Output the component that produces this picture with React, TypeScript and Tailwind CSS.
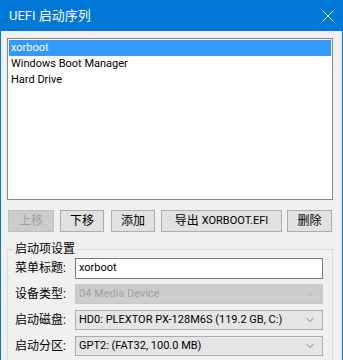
import { ChevronDown, X } from 'lucide-react';

const FONT = 'Roboto, "Noto Sans CJK SC", sans-serif';

const ITEMS = ['xorboot', 'Windows Boot Manager', 'Hard Drive'];

type Btn = { label: React.ReactNode; key: string; cls: string; disabled?: boolean };
const BUTTONS: Btn[] = [
  { key: 'up', label: '上移', cls: 'ml-[1px] w-[46px]', disabled: true },
  { key: 'down', label: '下移', cls: 'ml-[6px] w-[44px]' },
  { key: 'add', label: '添加', cls: 'ml-[7px] w-[44px]' },
  {
    key: 'export',
    label: (
      <>
        导出&nbsp;<span className="text-[11px]">XORBOOT.EFI</span>
      </>
    ),
    cls: 'ml-[6px] w-[121px]',
  },
  { key: 'del', label: '删除', cls: 'ml-[5px] w-[45px]' },
];

function Combo({ value, disabled }: { value: string; disabled?: boolean }) {
  return (
    <div
      className={`flex h-[20px] w-[248px] items-center border pl-[3px] pr-[6px] text-[11px] ${
        disabled
          ? 'border-[#c6c6c6] bg-[#cccccc] text-[#a0a0a0]'
          : 'border-[#acacac] bg-[#e5e5e5] text-black'
      }`}
    >
      <span className="flex-1 truncate">{value}</span>
      <ChevronDown
        size={12}
        strokeWidth={1.5}
        className={disabled ? 'text-[#b0b0b0]' : 'text-[#555]'}
      />
    </div>
  );
}

function Row({ label, children }: { label: string; children: React.ReactNode }) {
  return (
    <div className="flex h-[26px] items-start">
      <span className="w-[67px] shrink-0 pl-[7px] leading-[21px]">{label}</span>
      {children}
    </div>
  );
}

export default function App() {
  return (
    <div
      className="flex h-[360px] w-[343px] flex-col overflow-hidden text-[12px] text-black"
      style={{ fontFamily: FONT }}
    >
      <div className="flex h-[31px] shrink-0 items-center justify-between bg-[#0078d7] pl-[9px] pr-[5px] text-white">
        <span className="text-[13px]">UEFI 启动序列</span>
        <X size={20} strokeWidth={1.2} />
      </div>

      <div className="flex-1 border-x border-[#0078d7] bg-[#f0f0f0] pl-[6px] pt-[7px]">
        <div className="h-[162px] w-[326px] border border-[#828790] bg-white p-[1px] text-[11px]">
          {ITEMS.map((item, i) => (
            <div
              key={item}
              className={`h-[16px] pl-[2px] leading-[16px] ${
                i === 0 ? 'bg-[#3399ff] text-white' : ''
              }`}
            >
              {item}
            </div>
          ))}
        </div>

        <div className="mt-[10px] flex">
          {BUTTONS.map((b) => (
            <div
              key={b.key}
              className={`flex h-[22px] items-center justify-center border ${b.cls} ${
                b.disabled
                  ? 'border-[#bfbfbf] bg-[#cccccc] text-[#a0a0a0]'
                  : 'border-[#adadad] bg-[#e1e1e1]'
              }`}
            >
              {b.label}
            </div>
          ))}
        </div>

        <fieldset className="mt-[9px] h-[130px] w-[326px] border border-[#dcdcdc] pt-[1px]">
          <legend className="ml-[6px] px-[1px] leading-[16px]">启动项设置</legend>
          <Row label="菜单标题:">
            <div className="flex h-[21px] w-[248px] items-center border border-[#7a7a7a] bg-white pl-[3px] text-[11px]">
              xorboot
            </div>
          </Row>
          <Row label="设备类型:">
            <Combo value="04 Media Device" disabled />
          </Row>
          <Row label="启动磁盘:">
            <Combo value="HD0: PLEXTOR PX-128M6S (119.2 GB, C:)" />
          </Row>
          <Row label="启动分区:">
            <Combo value="GPT2: (FAT32, 100.0 MB)" />
          </Row>
        </fieldset>
      </div>
    </div>
  );
}
